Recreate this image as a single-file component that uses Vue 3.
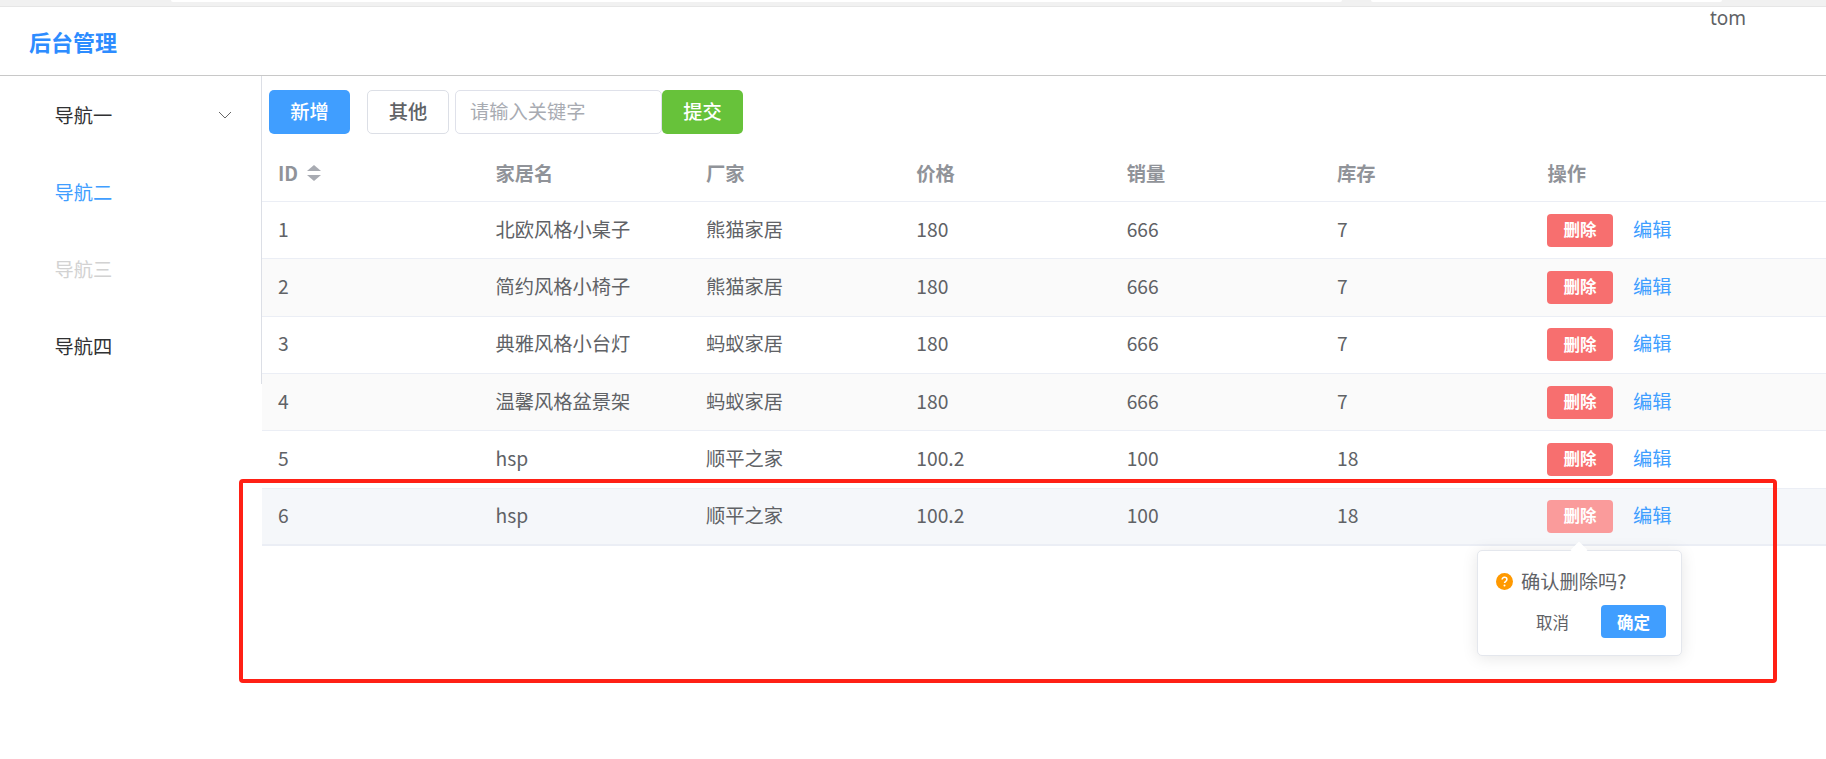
<script setup>
const rows = [
  { id: 1, name: '北欧风格小桌子', maker: '熊猫家居', price: '180', sales: '666', stock: '7' },
  { id: 2, name: '简约风格小椅子', maker: '熊猫家居', price: '180', sales: '666', stock: '7' },
  { id: 3, name: '典雅风格小台灯', maker: '蚂蚁家居', price: '180', sales: '666', stock: '7' },
  { id: 4, name: '温馨风格盆景架', maker: '蚂蚁家居', price: '180', sales: '666', stock: '7' },
  { id: 5, name: 'hsp', maker: '顺平之家', price: '100.2', sales: '100', stock: '18' },
  { id: 6, name: 'hsp', maker: '顺平之家', price: '100.2', sales: '100', stock: '18' }
]
const heads = ['家居名', '厂家', '价格', '销量', '库存', '操作']
const navs = [
  { label: '导航一', cls: '', arrow: true },
  { label: '导航二', cls: 'active', arrow: false },
  { label: '导航三', cls: 'disabled', arrow: false },
  { label: '导航四', cls: '', arrow: false }
]
</script>

<template>
  <div class="page">
    <div class="strip">
      <div class="tab tab-a"></div>
      <div class="tab tab-b"></div>
    </div>
    <header class="header">
      <div class="logo">后台管理</div>
      <div class="user">tom</div>
    </header>
    <div class="body">
      <aside class="side">
        <div v-for="n in navs" :key="n.label" class="nav" :class="n.cls">
          <span>{{ n.label }}</span>
          <svg v-if="n.arrow" class="chev" viewBox="0 0 14 8" width="14" height="8">
            <path d="M1 1l6 6 6-6" fill="none" stroke="#666" stroke-width="1" />
          </svg>
        </div>
      </aside>
      <main class="main">
        <div class="toolbar">
          <button class="btn primary">新增</button>
          <button class="btn plain">其他</button>
          <input class="kw" placeholder="请输入关键字" />
          <button class="btn success">提交</button>
        </div>
        <div class="table">
          <div class="row head">
            <div class="cell id-head">
              ID
              <span class="sort"><i class="up"></i><i class="down"></i></span>
            </div>
            <div v-for="h in heads" :key="h" class="cell">{{ h }}</div>
          </div>
          <div
            v-for="r in rows"
            :key="r.id"
            class="row"
            :class="{ stripe: r.id % 2 === 0 && r.id !== 6, hover: r.id === 6 }"
          >
            <div class="cell">{{ r.id }}</div>
            <div class="cell">{{ r.name }}</div>
            <div class="cell">{{ r.maker }}</div>
            <div class="cell">{{ r.price }}</div>
            <div class="cell">{{ r.sales }}</div>
            <div class="cell">{{ r.stock }}</div>
            <div class="cell ops">
              <button class="del" :class="{ faded: r.id === 6 }">删除</button>
              <a class="edit">编辑</a>
            </div>
          </div>
        </div>
      </main>
    </div>

    <div class="popover">
      <div class="arrow"></div>
      <div class="msg">
        <svg class="q" viewBox="0 0 17 17" width="17" height="17">
          <circle cx="8.5" cy="8.5" r="8.5" fill="#ff9900" />
          <path d="M6.1 6.6c0-1.4 1-2.3 2.4-2.3s2.4.9 2.4 2.1c0 1.9-2.4 1.9-2.4 3.7" fill="none" stroke="#fff" stroke-width="1.5" />
          <circle cx="8.5" cy="12.6" r="1" fill="#fff" />
        </svg>
        <span>确认删除吗?</span>
      </div>
      <div class="acts">
        <span class="cancel">取消</span>
        <button class="ok">确定</button>
      </div>
    </div>

    <div class="mark"></div>
  </div>
</template>

<style>
html, body { margin: 0; background: #fff; }
</style>

<style scoped>
.page {
  position: relative;
  width: 1826px;
  height: 759px;
  overflow: hidden;
  background: #fff;
  font-family: "Noto Sans CJK SC", "Noto Sans", sans-serif;
  font-size: 19.25px;
  color: #606266;
}
.strip {
  display: flex;
  height: 6px;
  background: #f1f1f1;
  border-bottom: 1px solid #e6e6e6;
}
.tab {
  height: 2px;
  background: #fff;
  border-radius: 0 0 8px 8px;
}
.tab-a { margin-left: 171px; width: 1171px; }
.tab-b { margin-left: 29px; width: 351px; }
.header {
  display: flex;
  justify-content: space-between;
  height: 68px;
  border-bottom: 1px solid #c8c8c8;
  box-sizing: content-box;
}
.logo {
  margin: 18px 0 0 29px;
  font-size: 22px;
  line-height: 32px;
  font-weight: 700;
  color: #2d8cff;
}
.user {
  margin: 0 80px 0 0;
  line-height: 22px;
  font-size: 19px;
  color: #606266;
  font-family: "Noto Sans", sans-serif;
}
.body { display: flex; align-items: flex-start; }
.side {
  width: 261px;
  flex: none;
  border-right: 1px solid #dcdfe6;
  box-sizing: content-box;
}
.nav {
  display: flex;
  align-items: center;
  justify-content: space-between;
  height: 77px;
  padding: 0 29px 0 54.5px;
  color: #303133;
  box-sizing: border-box;
}
.nav.active { color: #409eff; }
.nav.disabled { color: #d2d2d2; }
.main { flex: 1; min-width: 0; }
.toolbar {
  display: flex;
  align-items: stretch;
  height: 44px;
  margin: 14px 0 11px 7px;
}
.btn {
  width: 81px;
  height: 44px;
  padding: 0 0 2px;
  border: 1px solid transparent;
  border-radius: 5px;
  font: 500 19.25px "Noto Sans CJK SC", sans-serif;
  color: #fff;
}
.primary { background: #409eff; }
.plain { margin-left: 17px; width: 82px; background: #fff; color: #606266; border-color: #dcdfe6; }
.success { background: #67c23a; }
.kw {
  width: 207px;
  margin-left: 6px;
  padding: 0 14px 2px;
  border: 1.5px solid #dfe1ea;
  border-radius: 5px;
  box-sizing: border-box;
  font: 19.25px "Noto Sans CJK SC", sans-serif;
  outline: none;
}
.kw::placeholder { color: #a8abb2; }
.row {
  display: grid;
  grid-template-columns: 217px repeat(5, 210.4px) 1fr;
  height: 57.33px;
  border-bottom: 1px solid #ebeef5;
  box-sizing: border-box;
}
.row.head { height: 57px; color: #909399; font-weight: 700; }
.row.stripe { background: #fafafa; }
.row.hover { background: #f5f7fa; border-bottom-width: 2px; }
.cell {
  display: flex;
  align-items: center;
  padding: 0 0 3px 16.5px;
}
.cell:first-child { padding-left: 16px; }
.head .cell { padding-bottom: 1px; }
.id-head { gap: 9px; }
.sort { display: inline-flex; flex-direction: column; gap: 4px; margin-top: 1px; }
.sort i { display: block; width: 0; height: 0; border: 7px solid transparent; border-top-width: 0; border-bottom-width: 0; }
.sort .up { border-bottom: 6px solid #a8abb2; }
.sort .down { border-top: 6px solid #a8abb2; }
.ops { gap: 20px; padding-bottom: 0; padding-left: 16px; }
.del {
  width: 66px;
  height: 33px;
  padding: 0 0 2px;
  border: 0;
  border-radius: 4px;
  background: #f76f6f;
  color: #fff;
  font: 700 16.5px "Noto Sans CJK SC", sans-serif;
}
.del.faded { background: #fa9b9b; }
.edit { color: #409eff; margin-bottom: 3px; }
.popover {
  position: absolute;
  left: 1477px;
  top: 550px;
  width: 205px;
  height: 106px;
  box-sizing: border-box;
  padding: 17px 15px 0 18px;
  background: #fff;
  border: 1px solid #e4e7ed;
  border-radius: 5px;
  box-shadow: 0 2px 16px rgba(0, 0, 0, 0.1);
}
.arrow {
  position: absolute;
  left: 95px;
  top: -7px;
  width: 12px;
  height: 12px;
  background: #fff;
  transform: rotate(45deg);
}
.msg {
  position: relative;
  display: flex;
  align-items: center;
  gap: 8px;
  height: 26px;
  font-size: 19.25px;
}
.acts {
  display: flex;
  align-items: center;
  justify-content: flex-end;
  margin-top: 11px;
  gap: 32px;
}
.cancel { font-size: 16.5px; }
.ok {
  width: 65px;
  height: 33px;
  padding: 0;
  border: 0;
  border-radius: 4px;
  background: #409eff;
  color: #fff;
  font: 700 16.5px "Noto Sans CJK SC", sans-serif;
}
.mark {
  position: absolute;
  left: 239px;
  top: 479px;
  width: 1538px;
  height: 204px;
  box-sizing: border-box;
  border: 4px solid #ff2015;
  border-radius: 4px;
  pointer-events: none;
}
</style>
